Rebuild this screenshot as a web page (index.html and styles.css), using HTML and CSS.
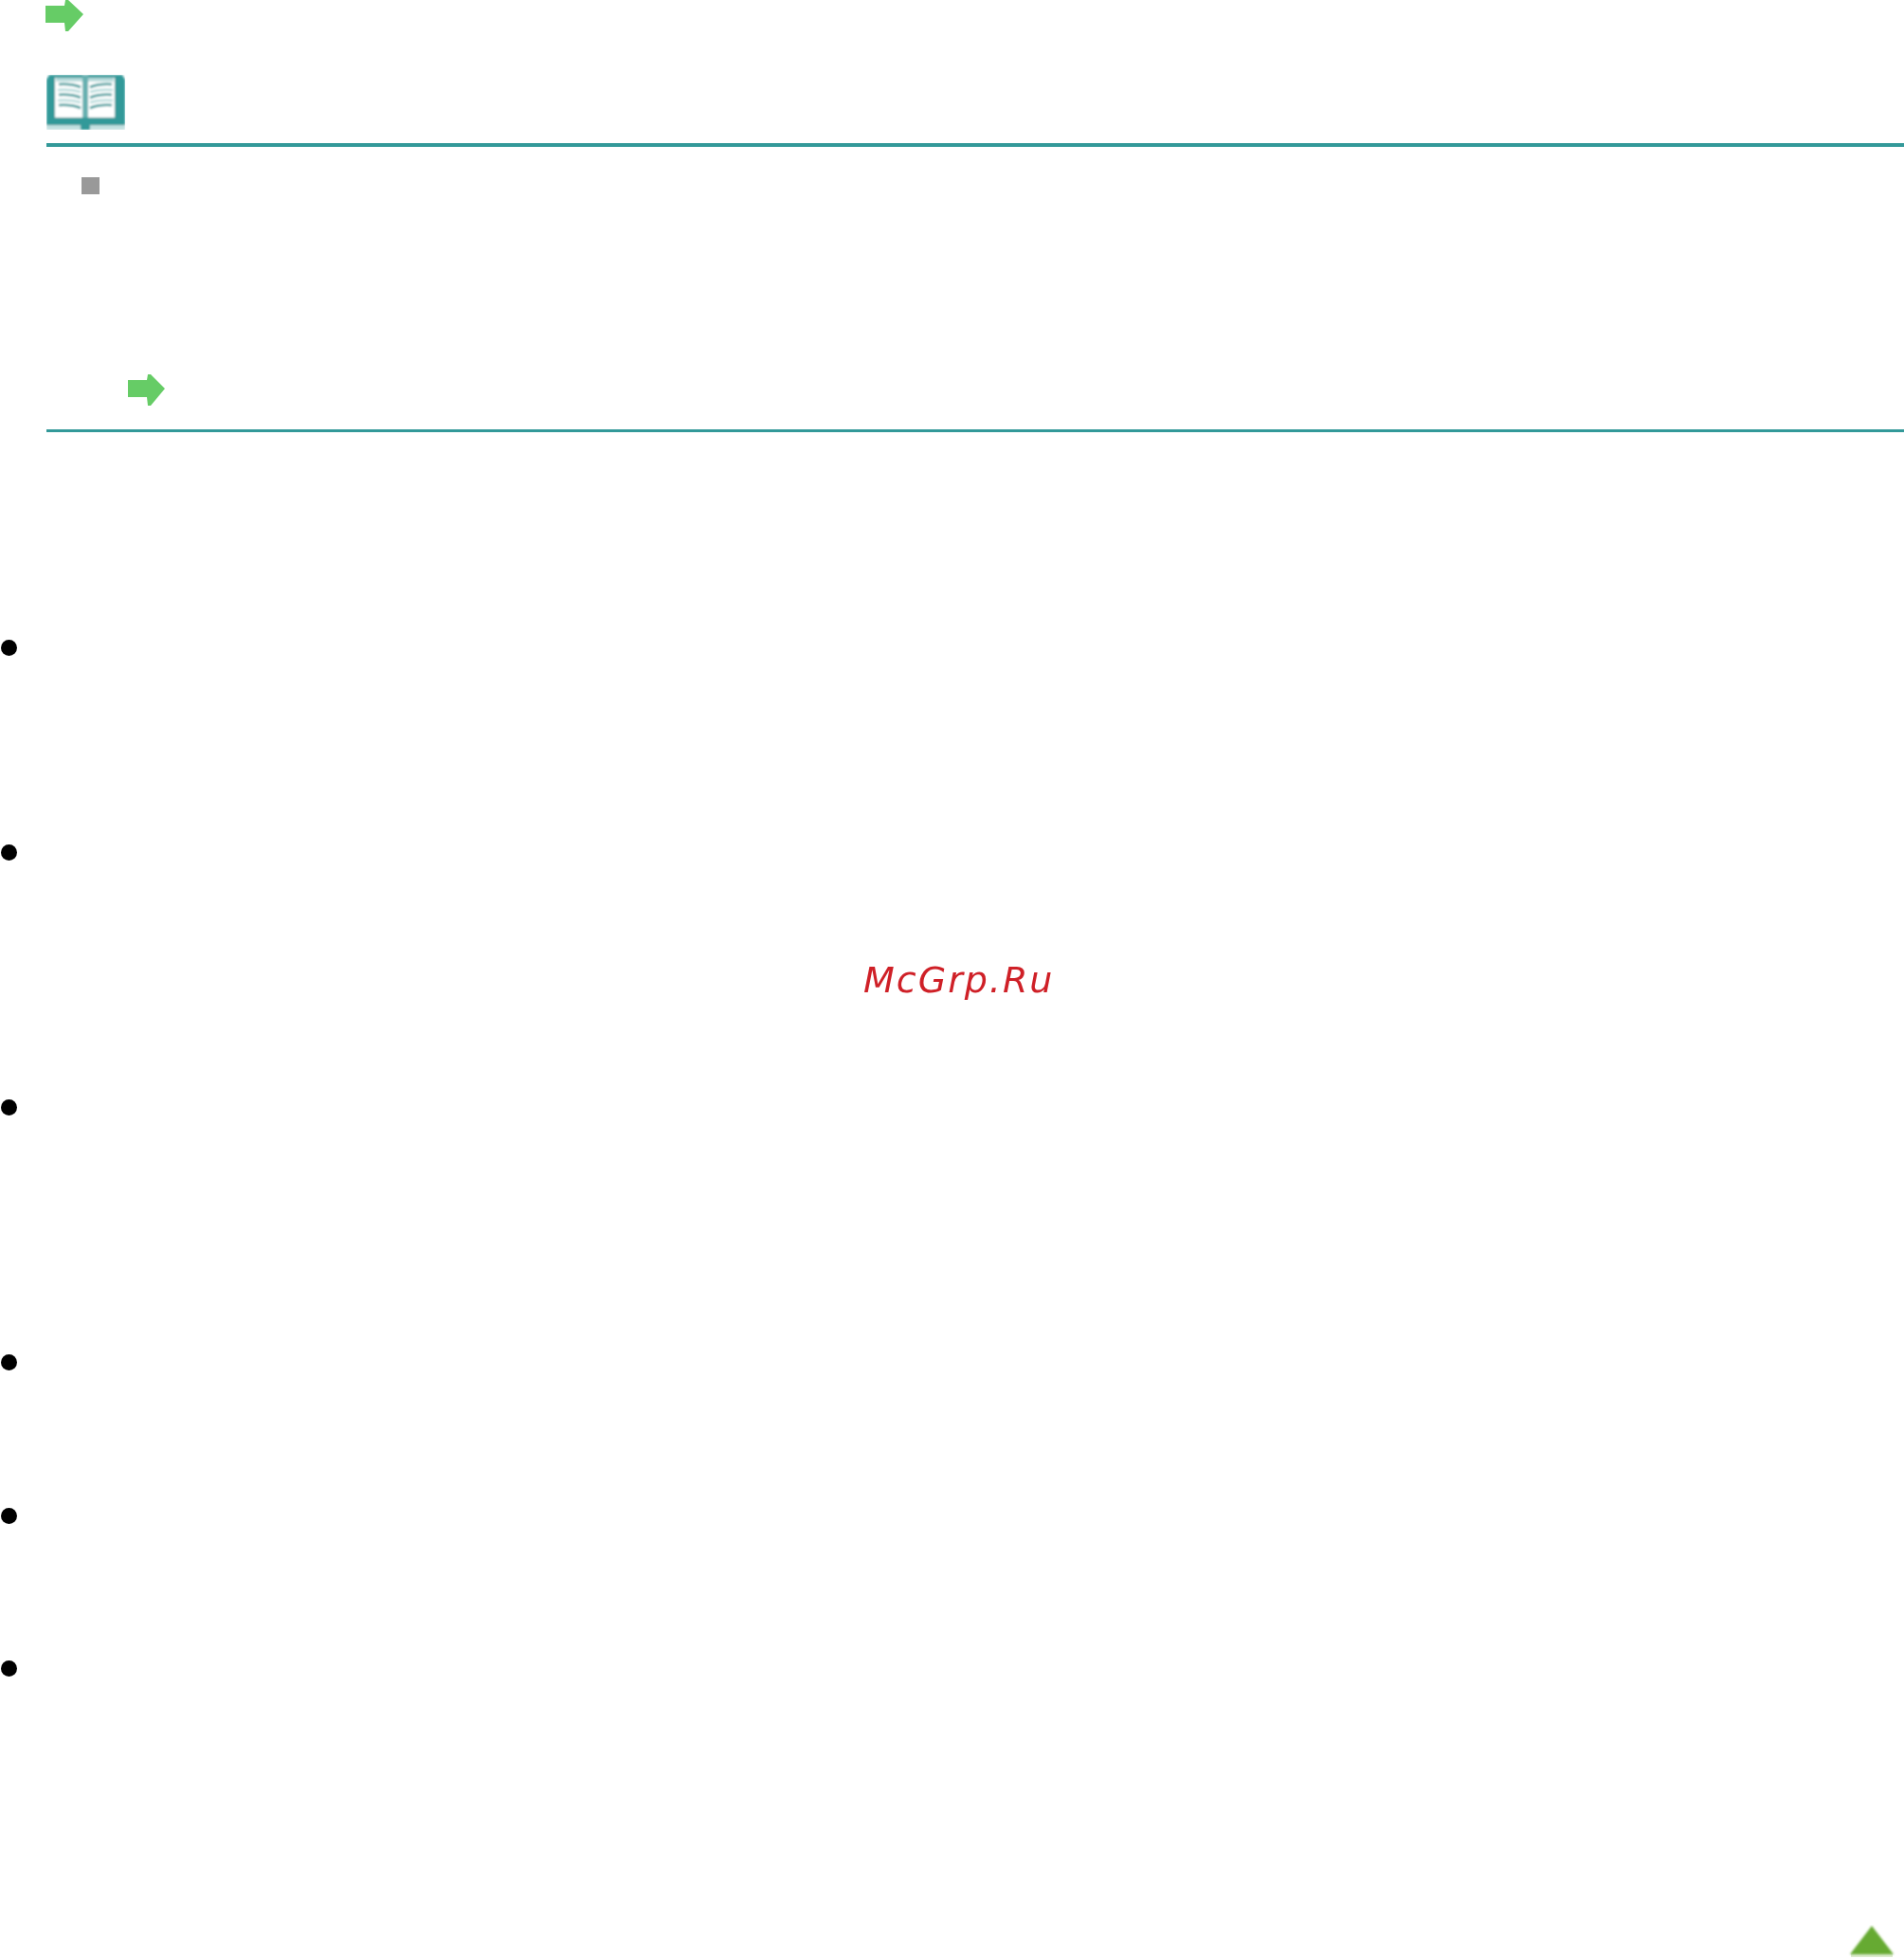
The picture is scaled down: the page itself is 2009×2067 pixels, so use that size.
FILE: index.html
```html
<!DOCTYPE html>
<html lang="en">
<head>
<meta charset="utf-8">
<title>Note</title>
<link rel="stylesheet" href="styles.css">
</head>
<body>
<svg width="0" height="0" class="defs" aria-hidden="true">
  <defs>
    <filter id="soft" x="-10%" y="-10%" width="120%" height="120%"><feGaussianBlur stdDeviation="0.9"/></filter>
    <filter id="softer" x="-10%" y="-10%" width="120%" height="120%"><feGaussianBlur stdDeviation="0.7"/></filter>
    <filter id="softest" x="-5%" y="-5%" width="110%" height="110%"><feGaussianBlur stdDeviation="1"/></filter>
  </defs>
</svg>
<main class="page">
  <div class="link-row">
    <svg class="arrow" viewBox="0 0 40 33"><polygon filter="url(#softer)" fill="#66cc66" points="0,6 20,6 21,0 24,0 40,15 24,33 21,33 20,24 0,24"/></svg>
  </div>
  <section class="note">
    <svg class="book" viewBox="0 0 83 58">
      <g filter="url(#softest)">
        <path fill="#339999" d="M3 0H80L83 5V53H0V5Z"/>
        <rect x="9" y="3" width="63" height="42" fill="#fff"/>
        <rect x="38" y="0" width="6" height="45" fill="#66b0b0"/>
        <g fill="#b5dada">
          <rect x="10" y="3" width="28" height="4"/><rect x="44" y="3" width="27" height="4"/>
        </g>
        <g stroke="#339999" stroke-width="2.6" fill="none">
          <path d="M13 10Q26 9 36 13M13 21Q26 20 36 24M13 32Q26 31 36 35"/>
          <path d="M69 10Q56 9 46 13M69 21Q56 20 46 24M69 32Q56 31 46 35"/>
        </g>
        <g stroke="#b5dada" stroke-width="2.4" fill="none">
          <path d="M12 16Q26 15 36 18M12 27Q26 26 36 29"/>
          <path d="M70 16Q56 15 46 18M70 27Q56 26 46 29"/>
        </g>
        <rect x="0" y="53" width="83" height="5" fill="#c2e0e0"/>
        <rect x="36" y="50" width="10" height="8" fill="#339999"/>
      </g>
    </svg>
    <hr class="rule rule-top">
    <div class="note-body">
      <span class="square"></span>
      <svg class="arrow arrow-inner" viewBox="0 0 40 33"><polygon filter="url(#softer)" fill="#66cc66" points="0,6 20,6 21,0 24,0 39,15 24,33 21,33 20,24 0,24"/></svg>
    </div>
    <hr class="rule rule-bottom">
  </section>
  <ul class="bullets">
    <li class="bullet b1"></li>
    <li class="bullet b2"></li>
    <li class="bullet b3"></li>
    <li class="bullet b4"></li>
    <li class="bullet b5"></li>
    <li class="bullet b6"></li>
  </ul>
  <div class="to-top">
    <svg class="triangle" viewBox="0 0 50 34">
      <rect x="3" y="30" width="44" height="4" fill="#dcebce" filter="url(#softer)"/>
      <polygon filter="url(#soft)" fill="#66aa33" points="25,1 48,31 2,31"/>
    </svg>
  </div>
  <div class="watermark">McGrp.Ru</div>
</main>
</body>
</html>
```
FILE: styles.css
```css
html, body {
  margin: 0;
  padding: 0;
  background: #fff;
}
.defs {
  position: absolute;
}
.page {
  position: relative;
  display: flex;
  flex-direction: column;
  width: 2009px;
  height: 2067px;
  overflow: hidden;
  font-family: "DejaVu Sans", sans-serif;
}
.link-row {
  display: flex;
  height: 33px;
  padding-left: 48px;
}
.arrow {
  display: block;
  width: 40px;
  height: 33px;
  flex: none;
}
.note {
  display: flex;
  flex-direction: column;
  margin-top: 46px;
  padding-left: 49px;
}
.book {
  display: block;
  width: 83px;
  height: 58px;
}
.rule {
  width: 100%;
  margin: 0;
  border: 0;
  background: #339999;
}
.rule-top {
  height: 4px;
  margin-top: 14px;
}
.rule-bottom {
  height: 3px;
  margin-top: 25px;
}
.note-body {
  display: flex;
  flex-direction: column;
  padding: 32px 0 0 37px;
}
.square {
  display: block;
  width: 19px;
  height: 18px;
  background: #999;
}
.arrow-inner {
  margin-top: 190px;
  margin-left: 49px;
}
.bullets {
  display: flex;
  flex-direction: column;
  margin: 219px 0 0;
  padding: 0 0 0 1px;
  list-style: none;
}
.bullet {
  width: 17px;
  height: 17px;
  border-radius: 50%;
  background: #000;
}
.b2 { margin-top: 199px; }
.b3 { margin-top: 252px; }
.b4 { margin-top: 252px; }
.b5 { margin-top: 145px; }
.b6 { margin-top: 144px; }
.to-top {
  display: flex;
  justify-content: flex-end;
  margin-top: auto;
  padding: 0 9px 2px 0;
}
.triangle {
  display: block;
  width: 50px;
  height: 34px;
}
.watermark {
  position: absolute;
  left: 911px;
  top: 1012px;
  font-size: 38px;
  line-height: 44px;
  font-style: oblique;
  letter-spacing: 2px;
  color: #cf2027;
  white-space: nowrap;
  filter: blur(0.4px);
}
```
